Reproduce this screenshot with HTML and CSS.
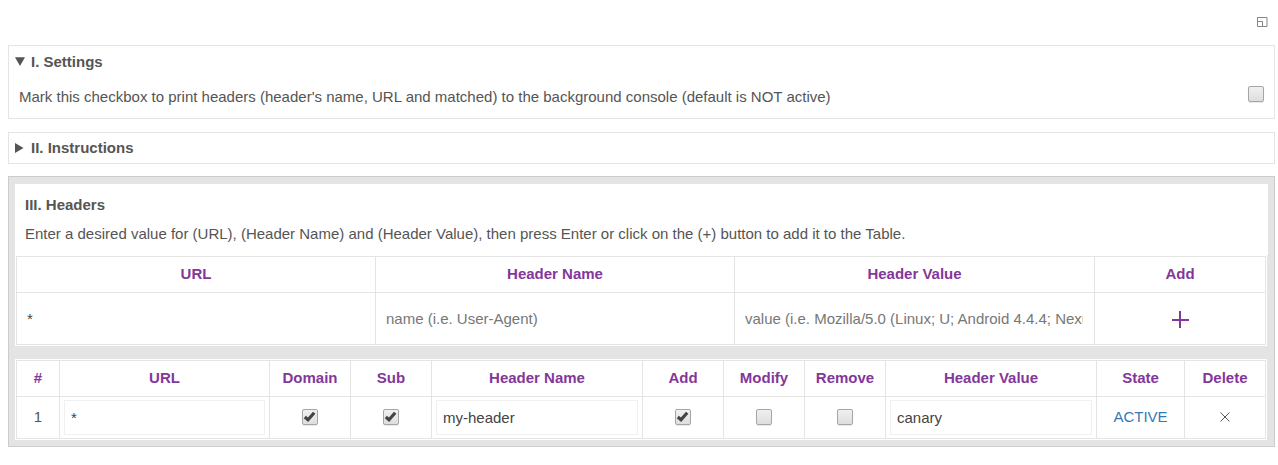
FILE: index.html
```html
<!DOCTYPE html>
<html lang="en">
<head>
<meta charset="utf-8">
<title>Headers</title>
<link rel="stylesheet" href="styles.css">
</head>
<body>
<header class="topbar">
  <svg class="popout" width="11" height="10" viewBox="0 0 11 10"><path d="M.5.5h9.500v9h-9.500zM.5 4.500h5v5"/></svg>
</header>

<section class="card settings">
  <h2 class="summary"><svg class="arrow" width="10" height="10"><path d="M0 .2h10L5 9z"/></svg>I. Settings</h2>
  <div class="option">
    <span>Mark this checkbox to print headers (header's name, URL and matched) to the background console (default is NOT active)</span>
    <span class="check"></span>
  </div>
</section>

<section class="card instructions">
  <h2 class="summary"><svg class="arrow" width="10" height="10"><path d="M0 0v10L8.500 5z"/></svg>II. Instructions</h2>
</section>

<section class="panel">
  <div class="intro">
    <h2 class="title">III. Headers</h2>
    <p class="hint">Enter a desired value for (URL), (Header Name) and (Header Value), then press Enter or click on the (+) button to add it to the Table.</p>
  </div>

  <div class="frame">
    <div class="grid entry">
      <div class="th">URL</div><div class="th">Header Name</div><div class="th">Header Value</div><div class="th">Add</div>
      <div class="td"><input class="field" value="*"></div>
      <div class="td"><input class="field" placeholder="name (i.e. User-Agent)"></div>
      <div class="td"><input class="field" placeholder="value (i.e. Mozilla/5.0 (Linux; U; Android 4.4.4; Nexus 5 Build/KTU84P))"></div>
      <div class="td"><svg class="plus" width="18" height="18"><path d="M1 9h17M9 0v17"/></svg></div>
    </div>
  </div>

  <div class="frame list-frame">
    <div class="grid list">
      <div class="th">#</div><div class="th">URL</div><div class="th">Domain</div><div class="th">Sub</div><div class="th">Header Name</div><div class="th">Add</div><div class="th">Modify</div><div class="th">Remove</div><div class="th">Header Value</div><div class="th">State</div><div class="th">Delete</div>
      <div class="td mid">1</div>
      <div class="td"><input class="field boxed" value="*"></div>
      <div class="td mid"><span class="check"><svg class="tick" width="14" height="14"><path d="M1.800 7l3.200 2.800L11.200 2.800"/></svg></span></div>
      <div class="td mid"><span class="check"><svg class="tick" width="14" height="14"><path d="M1.800 7l3.200 2.800L11.200 2.800"/></svg></span></div>
      <div class="td"><input class="field boxed" value="my-header"></div>
      <div class="td mid"><span class="check"><svg class="tick" width="14" height="14"><path d="M1.800 7l3.200 2.800L11.200 2.800"/></svg></span></div>
      <div class="td mid"><span class="check"></span></div>
      <div class="td mid"><span class="check"></span></div>
      <div class="td"><input class="field boxed" value="canary"></div>
      <div class="td mid state">ACTIVE</div>
      <div class="td mid"><svg class="cross" width="10" height="10"><path d="M.5.5l9 9M9.500.5l-9 9"/></svg></div>
    </div>
  </div>
</section>
</body>
</html>
```
FILE: styles.css
```css
* { box-sizing: border-box; }
body {
  margin: 0;
  padding: 0 3px 0 8px;
  background: #fff;
  color: #555;
  font: 15px/18px "Liberation Sans", Arial, sans-serif;
  overflow: hidden;
}
h2, p { margin: 0; font-size: 15px; }
svg { display: block; flex: none; fill: none; }
.topbar { display: flex; justify-content: flex-end; height: 45px; padding: 17px 7px 0 0; }
.popout { stroke: #85858b; }
.card { border: 1px solid #e4e4e4; padding: 7px 10px 0 6px; }
.settings { height: 74px; }
.instructions { height: 32px; margin: 13px 0 12px; padding-top: 6px; }
.summary { display: flex; align-items: center; gap: 6px; }
.arrow { fill: #555; }
.option { display: flex; justify-content: space-between; align-items: flex-start; padding: 17px 0 0 4px; }
.option .check { margin-top: -2px; }
.check {
  display: block;
  flex: none;
  width: 16px;
  height: 16px;
  border: 1px solid #a6a6a6;
  border-radius: 2px;
  background: linear-gradient(#f0f0f0, #dedede);
  box-shadow: 0 1px 1px #00000018;
}
.tick { stroke: #444; stroke-width: 3.200; }
.panel { height: 271px; border: 1px solid #ccc; background: #e4e4e4; padding: 7px 6px 6px; }
.intro { height: 71px; padding: 12px 10px 0; background: #fff; }
.title { margin-bottom: 11px; }
.frame { width: 1252px; padding: 1px; background: #fff; }
.list-frame { margin-top: 13px; }
.grid { display: grid; gap: 1px; padding: 1px; background: #e4e4e4; }
.entry { grid-template: 35px 51px / 358px 358px 359px 170px; }
.list { grid-template: 35px 41px / 42px 209px 80px 80px 210px 80px 80px 80px 210px 87px 80px; }
.th, .td { display: flex; align-items: center; justify-content: center; min-width: 0; background: #fff; }
.th { color: #83379b; font-weight: bold; padding-bottom: 1px; }
.mid { padding-bottom: 1px; }
.field {
  width: 100%;
  height: 35px;
  margin: 0;
  padding: 0 11px 0 10px;
  border: 0;
  outline: 0;
  background: none;
  color: #444;
  font: inherit;
}
.field::placeholder { color: #777; opacity: 1; }
.boxed { margin: 0 4px; padding: 0 6px 1px; border: 1px solid #f0f0f0; }
.plus { stroke: #83379b; stroke-width: 2; margin-top: 3px; }
.state { color: #337ab7; }
.cross { stroke: #555; }
```
